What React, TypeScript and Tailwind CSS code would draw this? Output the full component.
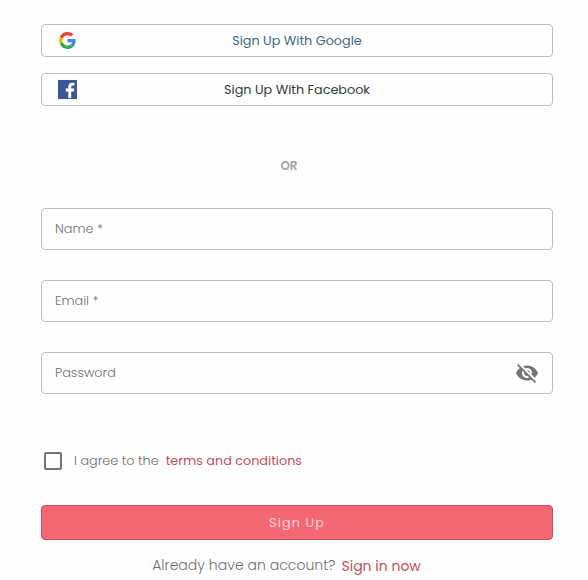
import React, { useState } from 'react';
import { MdVisibility, MdVisibilityOff } from 'react-icons/md';

const GoogleLogo: React.FC = () => (
  <svg width="17" height="17" viewBox="0 0 48 48">
    <path fill="#EA4335" d="M24 9.5c3.54 0 6.71 1.22 9.21 3.6l6.85-6.85C35.9 2.38 30.47 0 24 0 14.62 0 6.51 5.38 2.56 13.22l7.98 6.19C12.43 13.72 17.74 9.5 24 9.5z" />
    <path fill="#4285F4" d="M46.98 24.55c0-1.57-.15-3.09-.38-4.55H24v9.02h12.94c-.58 2.96-2.26 5.48-4.78 7.18l7.73 6c4.51-4.18 7.09-10.36 7.09-17.65z" />
    <path fill="#FBBC05" d="M10.53 28.59c-.48-1.45-.76-2.99-.76-4.59s.27-3.14.76-4.59l-7.98-6.19C.92 16.46 0 20.12 0 24c0 3.88.92 7.54 2.56 10.78l7.97-6.19z" />
    <path fill="#34A853" d="M24 48c6.48 0 11.93-2.13 15.89-5.81l-7.73-6c-2.15 1.45-4.92 2.3-8.16 2.3-6.26 0-11.57-4.22-13.47-9.91l-7.98 6.19C6.51 42.62 14.62 48 24 48z" />
  </svg>
);

const FacebookLogo: React.FC = () => (
  <svg width="19" height="19" viewBox="0 0 19 19">
    <path fill="#3b5998" d="M0 0h19v19H0z" />
    <path fill="#fff" d="M10.3 18v-6.6H7.8V8.6h2.5V6.6c0-2.5 1.5-3.9 3.8-3.9 1.1 0 2 .1 2.3.1v2.7h-1.6c-1.2 0-1.6.6-1.6 1.5v1.6h3l-.4 2.8h-2.6V18z" />
  </svg>
);

interface SocialButtonProps {
  icon: React.ReactNode;
  className: string;
  children: React.ReactNode;
}

const SocialButton: React.FC<SocialButtonProps> = ({ icon, className, children }) => (
  <button className="flex h-[33px] w-full items-center rounded border border-[#bdbdbd] px-4">
    <span className="flex w-[19px] justify-center">{icon}</span>
    <span className="flex flex-1 justify-center pr-[19px] text-[12.8px] leading-5">
      <span className={className}>{children}</span>
    </span>
  </button>
);

const inputStyle = 'h-full min-w-0 flex-1 bg-transparent text-[12.8px] font-light text-[#555] outline-none placeholder:text-[#707070] placeholder:opacity-100';
const fieldStyle = 'flex h-[42px] items-center rounded border border-[#bdbdbd] px-[13px]';

const App: React.FC = () => {
  const [showPassword, setShowPassword] = useState(false);
  const [agreed, setAgreed] = useState(false);

  return (
    <div className="h-[580px] w-[588px] overflow-hidden bg-[#fefefe] pl-[41px] pr-[35px] pt-6 font-['Poppins','Inter',sans-serif]">
      <div className="flex flex-col gap-4">
        <SocialButton icon={<GoogleLogo />} className="text-[#3c6a7d]">Sign Up With Google</SocialButton>
        <SocialButton icon={<FacebookLogo />} className="text-[#303a35]">Sign Up With Facebook</SocialButton>
      </div>

      <div className="mt-[50px] h-5 pr-4 text-center text-xs font-semibold leading-5 text-[#a5a5a5]">OR</div>

      <form onSubmit={(e) => e.preventDefault()}>
        <div className="mt-8 flex flex-col gap-[30px]">
          <div className={fieldStyle}>
            <input className={inputStyle} placeholder="Name *" />
          </div>
          <div className={fieldStyle}>
            <input className={inputStyle} placeholder="Email *" />
          </div>
          <div className={fieldStyle}>
            <input className={inputStyle} type={showPassword ? 'text' : 'password'} placeholder="Password" />
            <button type="button" className="text-[#757575]" onClick={() => setShowPassword(!showPassword)}>
              {showPassword ? <MdVisibility size={24} /> : <MdVisibilityOff size={24} />}
            </button>
          </div>
        </div>

        <label className="mt-[57px] flex h-5 items-center pl-[3px] text-[12.8px] leading-5">
          <input
            type="checkbox"
            checked={agreed}
            onChange={(e) => setAgreed(e.target.checked)}
            className="mr-3 size-[18px] appearance-none rounded-[2px] border-2 border-[#757575] checked:bg-[#f46875]"
          />
          <span className="font-light text-[#6f6f6f]">I agree to the</span>
          <a className="ml-[7px] text-[#c25060]">terms and conditions</a>
        </label>

        <button className="mt-[34px] h-[35px] w-full rounded border border-[#c9525e] bg-[#f46875] text-[12.8px] tracking-[1.1px] text-[#fbd0d4]">
          Sign Up
        </button>
      </form>

      <div className="mt-[15px] flex h-5 justify-center pr-[21px] text-sm leading-5">
        <span className="font-light tracking-[0.03px] text-[#6f6f6f]">Already have an account?</span>
        <a className="ml-1.5 pt-px text-[#c25060]">Sign in now</a>
      </div>
    </div>
  );
};

export default App;
